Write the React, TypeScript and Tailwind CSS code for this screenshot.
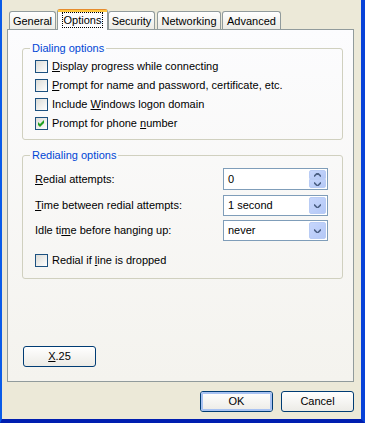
import React from "react";

const U = ({ children }: { children: React.ReactNode }) => <span className="underline underline-offset-[1px]">{children}</span>;

function Checkbox({ checked }: { checked?: boolean }) {
  return (
    <div className="w-[13px] h-[13px] border border-[#1C5180] bg-gradient-to-br from-[#DCDCD7] to-[#FFFFFF] flex items-center justify-center shrink-0">
      {checked && (
        <svg width="7" height="7" viewBox="0 0 7 7">
          <path d="M0 2 L2 4 L6 0 L6 3 L2 7 L0 5 Z" fill="#21A121" />
        </svg>
      )}
    </div>
  );
}

function CheckRow({ checked, children }: { checked?: boolean; children: React.ReactNode }) {
  return (
    <div className="flex items-center h-[13px] gap-[4px]">
      <Checkbox checked={checked} />
      <span className="leading-[13px]">{children}</span>
    </div>
  );
}

function ArrowBtn({ up }: { up?: boolean }) {
  return (
    <svg width="7" height="4" viewBox="0 0 7 4">
      {up ? (
        <path d="M0 3.5 L3.5 0 L7 3.5" fill="none" stroke="#4D6185" strokeWidth="1.6" />
      ) : (
        <path d="M0 0.5 L3.5 4 L7 0.5" fill="none" stroke="#4D6185" strokeWidth="1.6" />
      )}
    </svg>
  );
}

function Combo({ value }: { value: string }) {
  return (
    <div className="w-[105px] h-[21px] border border-[#7F9DB9] bg-white flex items-center p-px">
      <span className="flex-1 pl-[3px]">{value}</span>
      <div className="w-[17px] h-[17px] rounded-[2px] border border-[#B9CCF5] bg-gradient-to-br from-[#C6D6FC] to-[#B4C8F6] flex items-center justify-center">
        <ArrowBtn />
      </div>
    </div>
  );
}

function Spinner({ value }: { value: string }) {
  return (
    <div className="w-[105px] h-[22px] border border-[#7F9DB9] bg-white flex items-center p-px">
      <span className="flex-1 pl-[3px]">{value}</span>
      <div className="w-[17px] h-[18px] flex flex-col">
        <div className="h-[9px] rounded-t-[2px] border border-[#B9CCF5] bg-gradient-to-br from-[#C6D6FC] to-[#B4C8F6] flex items-center justify-center">
          <ArrowBtn up />
        </div>
        <div className="h-[9px] rounded-b-[2px] border border-[#B9CCF5] bg-gradient-to-br from-[#C6D6FC] to-[#B4C8F6] flex items-center justify-center">
          <ArrowBtn />
        </div>
      </div>
    </div>
  );
}

function Button({ children, def, className }: { children: React.ReactNode; def?: boolean; className?: string }) {
  return (
    <div className={"w-[73px] h-[21px] rounded-[3px] border border-[#003C74] bg-gradient-to-b from-[#FFFFFF] to-[#ECEBE6] flex items-center justify-center " + (className ?? "")}>
      <div className={"w-full h-full rounded-[2px] flex items-center justify-center " + (def ? "border-2 border-[#A8C2F2]" : "")}>
        {children}
      </div>
    </div>
  );
}

function Tab({ label, w, ml }: { label: string; w: string; ml: string }) {
  return (
    <div className={`${w} ${ml} h-[18px] rounded-t-[3px] border border-b-0 border-[#919B9C] bg-gradient-to-b from-[#FFFFFF] to-[#ECEBE5] flex items-center justify-center pt-px`}>
      {label}
    </div>
  );
}

export default function App() {
  return (
    <div className="w-[365px] h-[423px] bg-[#ECE9D8] flex border-l-2 border-l-[#0A5BE8] border-r-4 border-r-[#0842D8] border-b-4 border-b-[#001EB0] font-['Tahoma','Liberation_Sans',sans-serif] text-[11px] text-black overflow-hidden">
      <div className="flex flex-col pt-[9px] pl-[5px]">
        {/* tabs */}
        <div className="flex items-end pl-[2px] relative z-10">
          <Tab label="General" w="w-[47px]" ml="ml-0" />
          <div className="w-[51px] ml-[1px] h-[21px] -mb-px rounded-t-[3px] border border-b-0 border-[#919B9C] border-t-[#E68B2C] bg-[#FCFCFE] flex items-start justify-center pt-[2px] relative">
            <div className="absolute left-0 right-0 top-0 h-[2px] bg-[#FFC73C]" />
            <span className="border border-dotted border-black px-[1px] leading-[14px]">Options</span>
          </div>
          <Tab label="Security" w="w-[47px]" ml="ml-0" />
          <Tab label="Networking" w="w-[64px]" ml="ml-[2px]" />
          <Tab label="Advanced" w="w-[59px]" ml="ml-[1px]" />
        </div>
        {/* panel */}
        <div className="w-[347px] h-[353px] border border-[#919B9C] bg-gradient-to-b from-[#FCFCFE] to-[#F4F3EE] flex flex-col pl-[14px] pr-[10px] pt-[12px]">
          <fieldset className="border border-[#D0D0BF] rounded-[3px]">
            <legend className="ml-[7px] px-[2px] text-[#0046D5] leading-[13px]">Dialing options</legend>
            <div className="flex flex-col gap-[6px] pt-[5px] pl-[12px] pb-[9px]">
              <CheckRow><U>D</U>isplay progress while connecting</CheckRow>
              <CheckRow><U>P</U>rompt for name and password, certificate, etc.</CheckRow>
              <CheckRow>Include <U>W</U>indows logon domain</CheckRow>
              <CheckRow checked>Prompt for phone <U>n</U>umber</CheckRow>
            </div>
          </fieldset>
          <fieldset className="border border-[#D0D0BF] rounded-[3px] mt-[9px]">
            <legend className="ml-[7px] px-[2px] text-[#0046D5] leading-[13px]">Redialing options</legend>
            <div className="flex flex-col pt-[6px] pl-[12px] pr-[14px] pb-[11px]">
              <div className="flex items-center justify-between">
                <span><U>R</U>edial attempts:</span>
                <Spinner value="0" />
              </div>
              <div className="flex items-center justify-between mt-[5px]">
                <span><U>T</U>ime between redial attempts:</span>
                <Combo value="1 second" />
              </div>
              <div className="flex items-center justify-between mt-[4px]">
                <span>Idle ti<U>m</U>e before hanging up:</span>
                <Combo value="never" />
              </div>
              <div className="mt-[13px]">
                <CheckRow>Redial if <U>l</U>ine is dropped</CheckRow>
              </div>
            </div>
          </fieldset>
          <div className="flex-1" />
          <Button className="ml-[1px] mb-[14px]"><span><U>X</U>.25</span></Button>
        </div>
        {/* bottom buttons */}
        <div className="flex justify-end gap-[8px] mt-[9px] w-[347px]">
          <Button def>OK</Button>
          <Button>Cancel</Button>
        </div>
      </div>
    </div>
  );
}
